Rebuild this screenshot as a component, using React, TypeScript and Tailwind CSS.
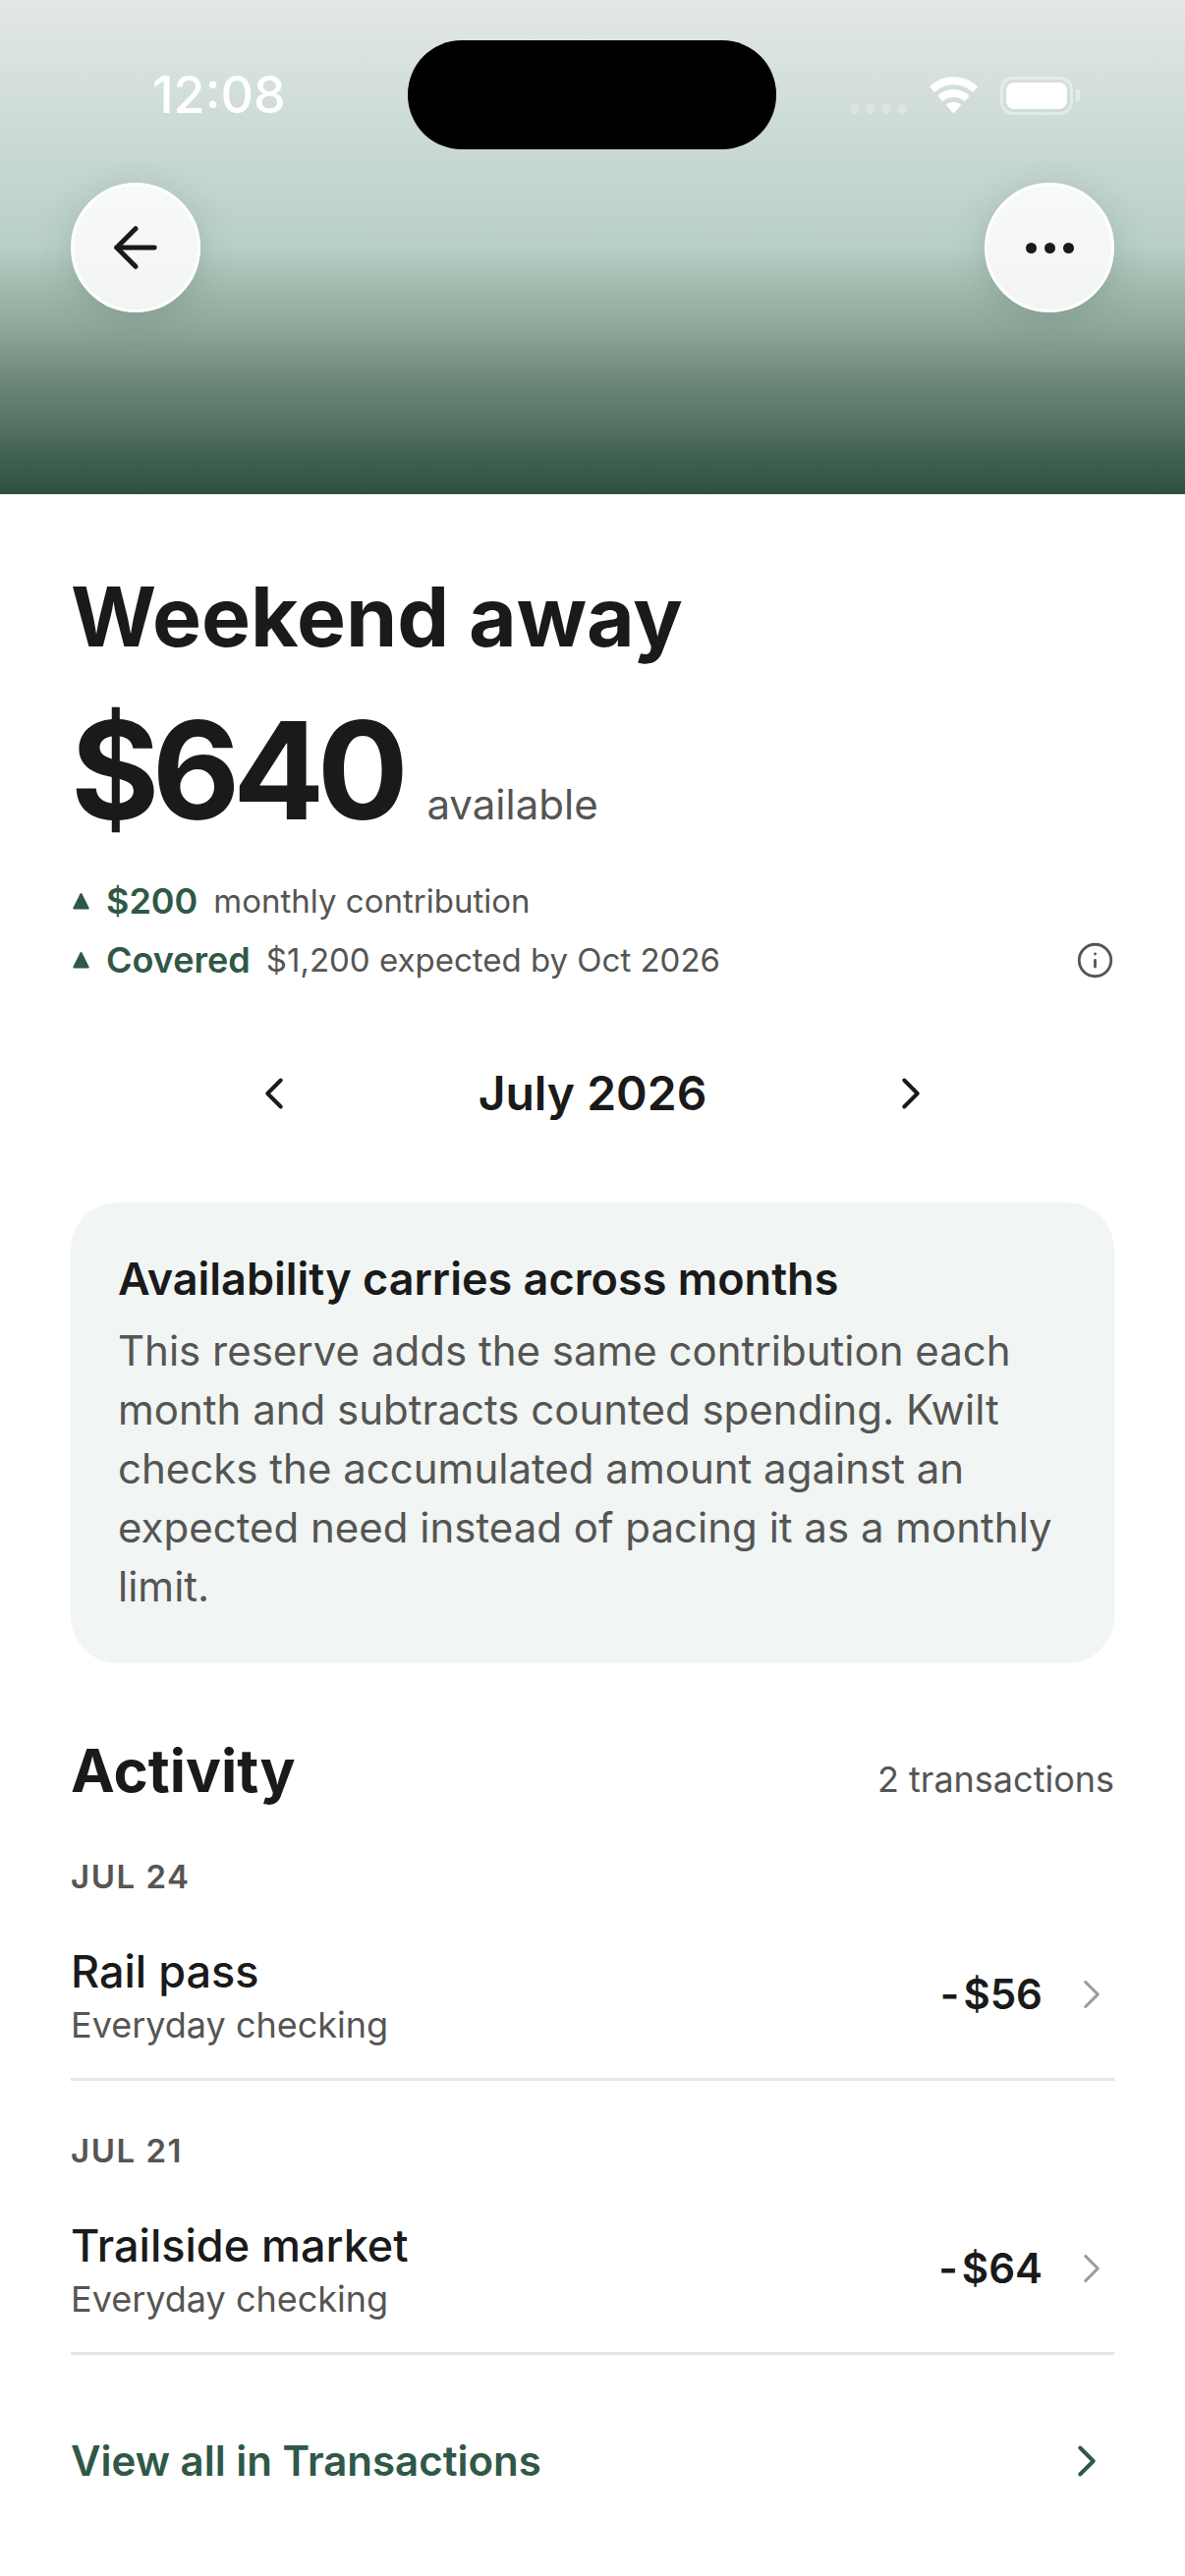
import { ArrowLeft, ChevronLeft, ChevronRight, Info } from 'lucide-react';

function Wifi() {
  return (
    <svg width="51" height="38" viewBox="0 0 52 38" fill="white">
      <path d="M26 0C16 0 7.500 3.800 1 10l5 6C11.500 10.800 18.300 8 26 8s14.500 2.800 20 8l5-6C44.500 3.800 36 0 26 0Z" />
      <path d="M26 13c-6.500 0-12.300 2.500-16.500 6.500l5 5.800C17.500 22.600 21.500 21 26 21s8.500 1.600 11.500 4.300l5-5.800C38.300 15.500 32.500 13 26 13Z" />
      <path d="M26 26c-3 0-5.700 1.100-7.800 3L26 38l7.800-9c-2.100-1.900-4.800-3-7.800-3Z" />
    </svg>
  );
}

function Battery() {
  return (
    <div className="flex items-center">
      <div className="w-[74px] h-[39px] rounded-[13px] border-[3px] border-white/40 p-[3px]">
        <div className="w-full h-full rounded-[8px] bg-white" />
      </div>
      <div className="w-[4px] h-[12px] rounded-r-[2px] bg-white/40 ml-[3px]" />
    </div>
  );
}

function Caret() {
  return (
    <svg width="17" height="18" viewBox="0 0 17 18" className="shrink-0 ml-[2px]">
      <path d="M8.500 2 15.700 16.500H1.300Z" fill="#2f5847" stroke="#2f5847" strokeWidth="2" strokeLinejoin="round" />
    </svg>
  );
}

function Stat({ value, label }: { value: string; label: string }) {
  return (
    <div className="flex items-center h-[48px]">
      <Caret />
      <span className="ml-[17px] text-[36px] font-semibold text-[#2f5847] leading-none">{value}</span>
      <span className="ml-[16px] text-[33px] text-[#555553] leading-none">{label}</span>
    </div>
  );
}

function Txn({ date, name, amount }: { date: string; name: string; amount: string }) {
  return (
    <div className="border-b-[3px] border-[#e4e6e5]">
      <div className="text-[33px] font-semibold tracking-[1.500px] text-[#555553] leading-[42px]">{date}</div>
      <div className="flex items-center justify-between mt-[49px] pb-[30px]">
        <div>
          <div className="text-[45px] font-medium text-[#1a1a1a] leading-[54px]">{name}</div>
          <div className="mt-[3px] text-[36px] text-[#555553] leading-[48px]">Everyday checking</div>
        </div>
        <div className="flex items-center mb-[6px] mr-[-2px]">
          <span className="text-[42px] font-semibold text-[#1a1a1a] leading-none">
            <span className="mr-[4px]">-</span>
            {amount}
          </span>
          <ChevronRight className="ml-[25px] text-[#9a9c9b]" size={50} strokeWidth={1.500} />
        </div>
      </div>
    </div>
  );
}

export default function App() {
  return (
    <div className="w-[1206px] h-[2622px] bg-white font-['Inter',sans-serif] overflow-hidden">
      <div className="relative h-[503px] bg-[linear-gradient(180deg,#e3e8e4_0%,#b8cfc7_50%,#a8bfb4_56%,#8fa89b_66%,#6f8a7b_76%,#557363_86%,#3f5f4f_93%,#2f4f40_100%)]">
        <div className="absolute left-[415px] top-[41px] w-[375px] h-[111px] rounded-[55px] bg-black" />
        <div className="flex items-start justify-between pt-[41px] pl-[155px] pr-[107px]">
          <span className="mt-[26px] text-[52px] leading-[60px] font-medium text-white">12:08</span>
          <div className="flex items-center mt-[36px] h-[40px]">
            <div className="flex gap-[6px] mt-[28px] mr-[22px]">
              <div className="w-[10px] h-[10px] rounded-full bg-white/25" />
              <div className="w-[10px] h-[10px] rounded-full bg-white/25" />
              <div className="w-[10px] h-[10px] rounded-full bg-white/25" />
              <div className="w-[10px] h-[10px] rounded-full bg-white/25" />
            </div>
            <Wifi />
            <div className="ml-[22px]"><Battery /></div>
          </div>
        </div>
        <div className="flex justify-between px-[72px] mt-[59px]">
          <button className="w-[132px] h-[132px] rounded-full bg-[linear-gradient(180deg,#f8faf9,#f2f5f4)] border-[3px] border-white flex items-center justify-center shadow-[0_6px_36px_rgba(40,70,60,0.18)]">
            <ArrowLeft size={66} strokeWidth={1.800} className="text-[#1a1a1a]" />
          </button>
          <button className="w-[132px] h-[132px] rounded-full bg-[linear-gradient(180deg,#f8faf9,#f2f5f4)] border-[3px] border-white flex items-center justify-center gap-[8px] shadow-[0_6px_36px_rgba(40,70,60,0.18)]">
            <span className="w-[11px] h-[11px] rounded-full bg-[#1a1a1a]" />
            <span className="w-[11px] h-[11px] rounded-full bg-[#1a1a1a]" />
            <span className="w-[11px] h-[11px] rounded-full bg-[#1a1a1a]" />
          </button>
        </div>
      </div>

      <div className="px-[72px] pt-[75px]">
        <h1 className="text-[84px] font-bold text-[#1a1a1a] leading-[100px]">Weekend away</h1>
        <div className="flex items-baseline mt-[31px]">
          <span className="text-[138px] font-bold text-[#1a1a1a] leading-[150px] tracking-[-7.500px]">$640</span>
          <span className="ml-[26px] text-[42px] text-[#555553]">available</span>
        </div>
        <div className="mt-[34px]">
          <Stat value="$200" label="monthly contribution" />
          <div className="flex items-center justify-between mt-[12px]">
            <Stat value="Covered" label="$1,200 expected by Oct 2026" />
            <Info size={39} strokeWidth={1.750} className="text-[#555553]" />
          </div>
        </div>

        <div className="flex items-center justify-between mt-[82px] px-[180px] h-[60px]">
          <ChevronLeft size={54} strokeWidth={1.750} className="text-[#1a1a1a]" />
          <span className="text-[48px] font-semibold text-[#1a1a1a]">July 2026</span>
          <ChevronRight size={54} strokeWidth={1.750} className="text-[#1a1a1a]" />
        </div>

        <div className="mt-[81px] rounded-[48px] bg-[#f1f5f3] px-[48px] pt-[51px] pb-[48px]">
          <div className="text-[45px] font-semibold text-[#1a1a1a] leading-[54px]">Availability carries across months</div>
          <p className="mt-[16px] text-[42px] text-[#555553] leading-[60px]">
            This reserve adds the same contribution each month and subtracts counted spending. Kwilt checks the accumulated amount against an expected need instead of pacing it as a monthly limit.
          </p>
        </div>

        <div className="flex items-center justify-between mt-[71px]">
          <span className="text-[60px] font-bold text-[#1a1a1a] leading-[76px]">Activity</span>
          <span className="mt-[18px] text-[36px] text-[#555553]">2 transactions</span>
        </div>

        <div className="mt-[49px]">
          <Txn date="JUL 24" name="Rail pass" amount="$56" />
        </div>
        <div className="mt-[50px]">
          <Txn date="JUL 21" name="Trailside market" amount="$64" />
        </div>

        <div className="flex items-center justify-between mt-[81px] pr-[1px]">
          <span className="text-[42px] font-semibold text-[#2f5847] leading-[54px]">View all in Transactions</span>
          <ChevronRight size={54} strokeWidth={1.750} className="text-[#2f5847]" />
        </div>
      </div>
    </div>
  );
}
